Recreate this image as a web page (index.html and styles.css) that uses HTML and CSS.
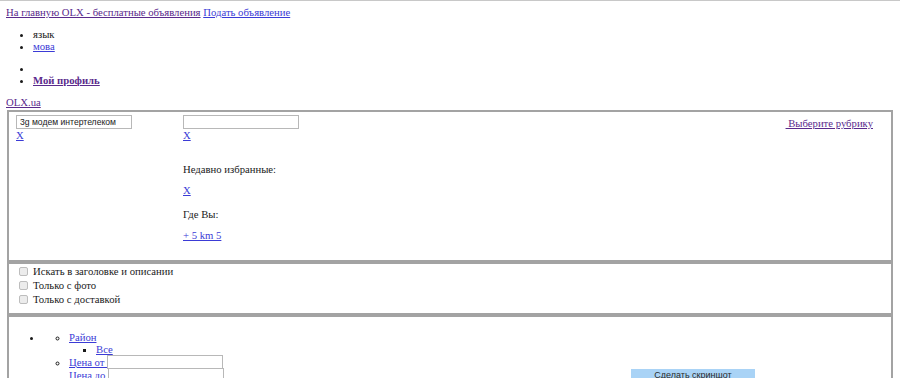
FILE: index.html
```html
<!DOCTYPE html>
<html lang="ru">
<head>
    <meta charset="UTF-8">
    <meta name="viewport" content="width=device-width, initial-scale=1.0">
    <title>OLX.ua - объявления</title>
    <link rel="stylesheet" href="styles.css">
</head>
<body>
    <div class="top-links">
        <a href="#" class="visited">На главную OLX - бесплатные объявления</a>
        <a href="#">Подать объявление</a>
    </div>

    <ul class="menu">
        <li>язык</li>
        <li><a href="#">мова</a></li>
    </ul>

    <ul class="menu">
        <li>&nbsp;</li>
        <li><a href="#" class="visited"><strong>Мой профиль</strong></a></li>
    </ul>

    <a href="#" class="visited">OLX.ua</a>

    <form class="search-form">
        <fieldset class="box search-box">
            <div class="search-query">
                <input type="text" class="text-input" value="3g модем интертелеком">
                <a href="#" class="clear-link">X</a>
            </div>
            <div class="search-city">
                <input type="text" class="text-input">
                <a href="#" class="clear-link">X</a>
                <p class="recent-title">Недавно избранные:</p>
                <p><a href="#">X</a></p>
                <p class="where">Где Вы:</p>
                <p><a href="#">+ 5 km 5</a></p>
            </div>
            <div class="search-category">
                <a href="#" class="visited">&nbsp;Выберите рубрику</a>
            </div>
        </fieldset>

        <fieldset class="box options-box">
            <label class="option"><input type="checkbox" class="check"> Искать в заголовке и описании</label>
            <label class="option"><input type="checkbox" class="check"> Только с фото</label>
            <label class="option"><input type="checkbox" class="check"> Только с доставкой</label>
        </fieldset>

        <fieldset class="box filter-box">
            <ul class="filters">
                <li>
                    <ul class="filter-group">
                        <li>
                            <a href="#">Район</a>
                            <ul class="filter-values">
                                <li><a href="#">Все</a></li>
                            </ul>
                        </li>
                        <li>
                            <label class="price-row"><a href="#">Цена от&nbsp;</a><input type="text" class="text-input price-input"></label>
                            <label class="price-row"><a href="#">Цена до&nbsp;</a><input type="text" class="text-input price-input"></label>
                        </li>
                    </ul>
                </li>
            </ul>
        </fieldset>
    </form>

    <div class="screenshot-btn">Сделать скриншот</div>
</body>
</html>
```

FILE: styles.css
```css
html {
    border-top: 1px solid #c8c8c8;
}
body {
    font-family: "Liberation Serif", "Times New Roman", serif;
    font-size: 10.7px;
    line-height: 12px;
    color: #1a1a1a;
    background-color: #ffffff;
    margin: 5px 6px;
    overflow: hidden;
}
a {
    color: #3b3bd6;
}
a.visited {
    color: #5a2a8c;
}
p {
    margin: 0;
}
.menu {
    margin: 10px 0;
    padding-left: 27px;
}
.search-form {
    margin-top: 2px;
}
.box {
    margin: 0 1px;
    border: 2px solid #a3a3a3;
    padding: 3px 8px 7px 8px;
}
.search-box {
    display: flex;
    align-items: flex-start;
    padding-left: 7px;
    padding-bottom: 19px;
}
.text-input {
    box-sizing: border-box;
    width: 116px;
    height: 14px;
    margin: 0;
    padding: 0 3px;
    border: 1px solid #b8b8b8;
    font-family: "Liberation Sans", Arial, sans-serif;
    font-size: 8.6px;
    color: #222222;
}
.clear-link {
    display: block;
}
.search-query {
    width: 167px;
}
.search-city {
    flex: 1;
}
.search-city p {
    margin-top: 9px;
}
.search-city .recent-title {
    margin-top: 22px;
}
.search-city .where {
    margin-top: 12px;
}
.search-category {
    padding-top: 2px;
    padding-right: 10px;
}
.options-box {
    padding-top: 0;
}
.option {
    display: flex;
    align-items: center;
    height: 14px;
}
.check {
    -webkit-appearance: none;
    appearance: none;
    width: 9px;
    height: 9px;
    margin: 0 5px 0 2px;
    border: 1px solid #bdbdbd;
    border-radius: 2px;
    background-color: #ececec;
}
.filter-box {
    padding-top: 2px;
}
.filters {
    margin: 12px 0;
    padding-left: 26px;
}
.filter-group {
    list-style-type: circle;
    padding-left: 26px;
}
.filter-values {
    list-style-type: square;
    padding-left: 27px;
}
.price-row {
    display: flex;
    align-items: center;
    height: 13px;
}
.price-input {
    height: 14px;
}
.screenshot-btn {
    position: absolute;
    top: 369px;
    left: 631px;
    width: 124px;
    height: 20px;
    background-color: #a9d3f6;
    color: #2b2b2b;
    font-family: "Liberation Sans", Arial, sans-serif;
    font-size: 9px;
    text-align: center;
    line-height: 13px;
}
```
